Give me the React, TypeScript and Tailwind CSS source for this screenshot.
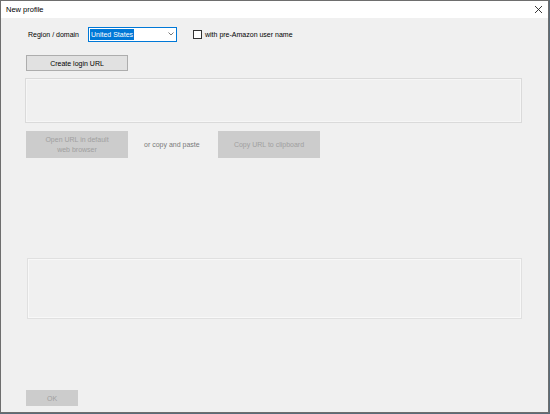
import React from "react";

export default function App() {
  return (
    <div className="w-[550px] h-[414px] bg-[#5a6b78] overflow-hidden" style={{ fontFamily: '"Liberation Sans", Arial, sans-serif' }}>
      <div className="w-[549px] h-[413px] border border-[#6e6e6e] bg-[#f0f0f0] flex flex-col text-[7px] text-black leading-none">
        {/* title bar */}
        <div className="h-[17px] bg-white flex items-center justify-between pl-[5px] pr-[3px] shrink-0">
          <span className="text-[7.5px]">New profile</span>
          <svg width="9" height="9" viewBox="0 0 9 9" className="mr-[2px]">
            <path d="M1 1 L8 8 M8 1 L1 8" stroke="#222" strokeWidth="0.9" />
          </svg>
        </div>
        {/* body */}
        <div className="flex flex-col pl-[24px] pr-[26px]">
          {/* row 1 */}
          <div className="flex items-center mt-[9px] h-[14px]">
            <span className="ml-[3px] w-[60px]">Region / domain</span>
            <div className="w-[89px] h-[15px] border border-[#0078d7] bg-white flex items-center justify-between pl-[1px] pr-[2px]">
              <span className="bg-[#0078d7] text-white h-[11px] px-[1px] flex items-center">United States</span>
              <svg width="6" height="4" viewBox="0 0 6 4">
                <path d="M0.5 0.5 L3 3 L5.5 0.5" stroke="#555" strokeWidth="0.8" fill="none" />
              </svg>
            </div>
            <div className="ml-[16px] w-[9px] h-[9px] border border-[#333] bg-white" />
            <span className="ml-[3px]">with pre-Amazon user name</span>
          </div>
          {/* create button */}
          <div className="mt-[14px] ml-[1px] w-[102px] h-[16px] bg-[#e1e1e1] border border-[#adadad] flex items-center justify-center">
            Create login URL
          </div>
          {/* box 1 */}
          <div className="mt-[7px] w-[497px] h-[45px] border border-[#dadada] bg-[#f0f0f0]">
            <div className="w-full h-full border border-[#f6f6f6]" />
          </div>
          {/* buttons row */}
          <div className="mt-[8px] ml-[1px] flex items-center h-[27px]">
            <div className="w-[102px] h-[27px] bg-[#cccccc] text-[#a0a0a0] flex flex-col items-center justify-center gap-[1px] leading-[9px]">
              <span>Open URL in default</span>
              <span>web browser</span>
            </div>
            <span className="ml-[16px] w-[74px] text-[#7a7a7a]">or copy and paste</span>
            <div className="w-[102px] h-[27px] bg-[#cccccc] text-[#a0a0a0] flex items-center justify-center">
              Copy URL to clipboard
            </div>
          </div>
          {/* box 2 */}
          <div className="mt-[100px] ml-[2px] w-[495px] h-[61px] border border-[#e0e0e0] bg-[#f0f0f0]">
            <div className="w-full h-full border border-[#f8f8f8]" />
          </div>
          {/* OK */}
          <div className="mt-[71px] ml-[1px] w-[52px] h-[16px] bg-[#cccccc] text-[#a0a0a0] flex items-center justify-center">
            OK
          </div>
        </div>
      </div>
    </div>
  );
}
